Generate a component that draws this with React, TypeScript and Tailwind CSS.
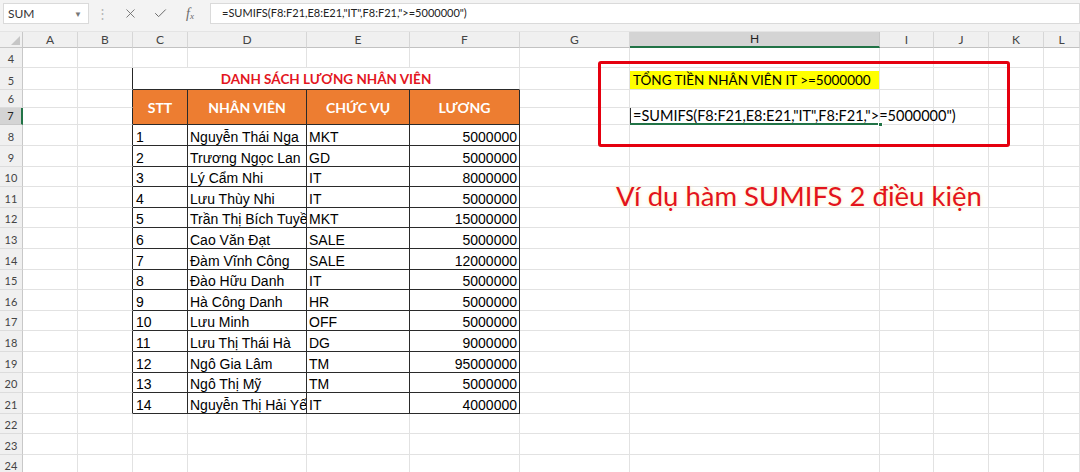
import { X, Check } from "lucide-react"

const COLS = ["A", "B", "C", "D", "E", "F", "G", "H", "I", "J", "K", "L"]

const staff = [
  ["1", "Nguyễn Thái Nga", "MKT", "5000000"],
  ["2", "Trương Ngọc Lan", "GD", "5000000"],
  ["3", "Lý Cẩm Nhi", "IT", "8000000"],
  ["4", "Lưu Thùy Nhi", "IT", "5000000"],
  ["5", "Trần Thị Bích Tuyền", "MKT", "15000000"],
  ["6", "Cao Văn Đạt", "SALE", "5000000"],
  ["7", "Đàm Vĩnh Công", "SALE", "12000000"],
  ["8", "Đào Hữu Danh", "IT", "5000000"],
  ["9", "Hà Công Danh", "HR", "5000000"],
  ["10", "Lưu Minh", "OFF", "5000000"],
  ["11", "Lưu Thị Thái Hà", "DG", "9000000"],
  ["12", "Ngô Gia Lâm", "TM", "95000000"],
  ["13", "Ngô Thị Mỹ", "TM", "5000000"],
  ["14", "Nguyễn Thị Hải Yến", "IT", "4000000"],
]

const FORMULA = '=SUMIFS(F8:F21,E8:E21,"IT",F8:F21,">=5000000")'

const blank = "border-r border-b border-[#e2e2e2]"
const tableEdge = "border-r border-b border-r-[#262626] border-b-[#e2e2e2]"
const dataCell =
  "border-r border-b border-[#2a2a2a] flex items-end text-[14px] leading-[16px] text-black whitespace-nowrap overflow-hidden font-['Liberation_Sans',sans-serif]"

const Toolbar = () => {
  return (
    <div className="h-[32px] bg-[#f3f3f3] flex items-start pt-[3px] border-b border-[#e4e4e4]">
      <div className="ml-[3px] w-[86px] h-[21px] bg-white border border-[#dadada] flex items-center justify-between pl-[4px] pr-[6px] text-[12px] text-[#333]">
        <span>SUM</span>
        <span className="text-[8px] text-[#777]">▼</span>
      </div>
      <div className="w-[26px] h-[21px] flex items-center justify-center text-[#b5b5b5] text-[13px]">⋮</div>
      <div className="w-[92px] h-[21px] flex items-center text-[#6a6a6a]">
        <div className="w-[30px] flex justify-center">
          <X size={15} strokeWidth={1.4} />
        </div>
        <div className="w-[30px] flex justify-center">
          <Check size={15} strokeWidth={1.6} />
        </div>
        <div className="w-[30px] flex justify-center font-['Liberation_Serif',serif] italic text-[14px] leading-none">
          f<span className="text-[9px] mt-[5px]">x</span>
        </div>
      </div>
      <div className="ml-[3px] flex-1 h-[21px] bg-white border border-[#dadada] flex items-center pl-[11px] text-[11px] text-[#222] whitespace-nowrap">
        {FORMULA}
      </div>
    </div>
  )
}

const RowHead = ({ n }: { n: number }) => {
  const active = n === 7
  return (
    <div
      className={
        active
          ? "bg-[#d4d4d4] border-r-2 border-r-[#217346] border-b border-b-[#c8c8c8] flex items-end justify-center pb-[2px] text-[11px] leading-[13px] text-[#222]"
          : "bg-[#f0f0f0] border-r border-r-[#c8c8c8] border-b border-b-[#dcdcdc] flex items-end justify-center pb-[2px] text-[11px] leading-[13px] text-[#444]"
      }>
      {n}
    </div>
  )
}

const renderRow = (r: number) => {
  const cells = [<RowHead key={`h${r}`} n={r} />]

  // A
  cells.push(<div key={`A${r}`} className={blank} />)
  // B, dark right edge where the table starts
  cells.push(<div key={`B${r}`} className={r >= 5 && r <= 21 ? tableEdge : blank} />)

  if (r === 5) {
    cells.push(
      <div
        key="title"
        className="col-span-4 border-r border-b border-r-[#e2e2e2] border-b-[#2a2a2a] flex items-end justify-center pb-[2px] text-[13.5px] leading-[16px] font-bold text-[#e3161e]">
        DANH SÁCH LƯƠNG NHÂN VIÊN
      </div>
    )
  } else if (r === 6) {
    ;["STT", "NHÂN VIÊN", "CHỨC VỤ", "LƯƠNG"].forEach((t) =>
      cells.push(
        <div
          key={t}
          className="row-span-2 bg-[#ed7d31] border-r border-b border-[#2a2a2a] flex items-center justify-center text-[14px] font-bold text-white">
          {t}
        </div>
      )
    )
  } else if (r >= 8 && r <= 21) {
    const [stt, name, role, pay] = staff[r - 8]
    cells.push(
      <div key={`C${r}`} className={`${dataCell} pl-[3px]`}>
        {stt}
      </div>
    )
    cells.push(
      <div key={`D${r}`} className={`${dataCell} pl-[2px]`}>
        {name}
      </div>
    )
    cells.push(
      <div key={`E${r}`} className={`${dataCell} pl-[2px]`}>
        {role}
      </div>
    )
    cells.push(
      <div key={`F${r}`} className={`${dataCell} justify-end pr-[2px]`}>
        {pay}
      </div>
    )
  } else if (r !== 7) {
    ;["C", "D", "E", "F"].forEach((c) => cells.push(<div key={`${c}${r}`} className={blank} />))
  }

  // G
  cells.push(<div key={`G${r}`} className={blank} />)

  // H
  if (r === 5) {
    cells.push(
      <div key="H5" className="border-r border-b border-[#e2e2e2] pt-[3px]">
        <div className="h-full bg-[#ffff00] flex items-end pl-[3px] pb-[1px] text-[13.5px] leading-[16px] text-black whitespace-nowrap">
          TỔNG TIỀN NHÂN VIÊN IT &gt;=5000000
        </div>
      </div>
    )
  } else if (r === 7) {
    cells.push(
      <div
        key="H7"
        className="relative z-10 border-r border-b border-[#e2e2e2] flex items-end pl-[3px] text-[14.5px] leading-[16px] text-black whitespace-nowrap">
        {FORMULA}
        <div className="absolute left-0 top-0 bottom-0 w-[1px] bg-[#2d2d2d]" />
        <div className="absolute left-0 right-0 bottom-[-1px] h-[2px] bg-[#217346]" />
        <div className="absolute right-[-4px] bottom-[-3px] w-[5px] h-[5px] bg-[#217346] border border-white" />
      </div>
    )
  } else {
    cells.push(<div key={`H${r}`} className={blank} />)
  }

  // I..L
  ;["I", "J", "K", "L"].forEach((c) => cells.push(<div key={`${c}${r}`} className={blank} />))

  return cells
}

const Sheet = () => {
  const rows = []
  for (let r = 4; r <= 24; r++) rows.push(...renderRow(r))

  return (
    <div className="grid grid-cols-[23px_55px_55px_55px_119px_103px_110px_110px_250px_54px_55px_55px_1fr] grid-rows-[16px_20px_22px_18px_17.4px_repeat(17,20.6px)]">
      <div className="relative bg-[#f0f0f0] border-r border-b border-[#c8c8c8]">
        <div className="absolute right-[2px] bottom-[2px] w-0 h-0 border-l-[9px] border-l-transparent border-b-[9px] border-b-[#c6c6c6]" />
      </div>
      {COLS.map((c) =>
        c === "H" ? (
          <div
            key={c}
            className="bg-[#d4d4d4] border-r border-r-[#c8c8c8] border-b-2 border-b-[#217346] flex items-center justify-center text-[12px] text-[#222]">
            {c}
          </div>
        ) : (
          <div
            key={c}
            className="bg-[#f0f0f0] border-r border-r-[#d6d6d6] border-b border-b-[#c2c2c2] flex items-center justify-center text-[12px] text-[#444]">
            {c}
          </div>
        )
      )}
      {rows}
    </div>
  )
}

const App = () => {
  return (
    <div className="relative w-[1080px] h-[472px] overflow-hidden bg-white font-['Lato',sans-serif]">
      <Toolbar />
      <Sheet />

      {/* drawn shapes lying over the sheet */}
      <div className="absolute left-[598px] top-[61px] w-[412px] h-[86px] border-[3px] border-[#e5000f] rounded-[3px]" />
      <div className="absolute left-[616px] top-[182px] text-[27.5px] leading-none text-[#e3141b] whitespace-nowrap [text-shadow:0_0_4px_#fff1b8]">
        Ví dụ hàm SUMIFS 2 điều kiện
      </div>
    </div>
  )
}

export default App
